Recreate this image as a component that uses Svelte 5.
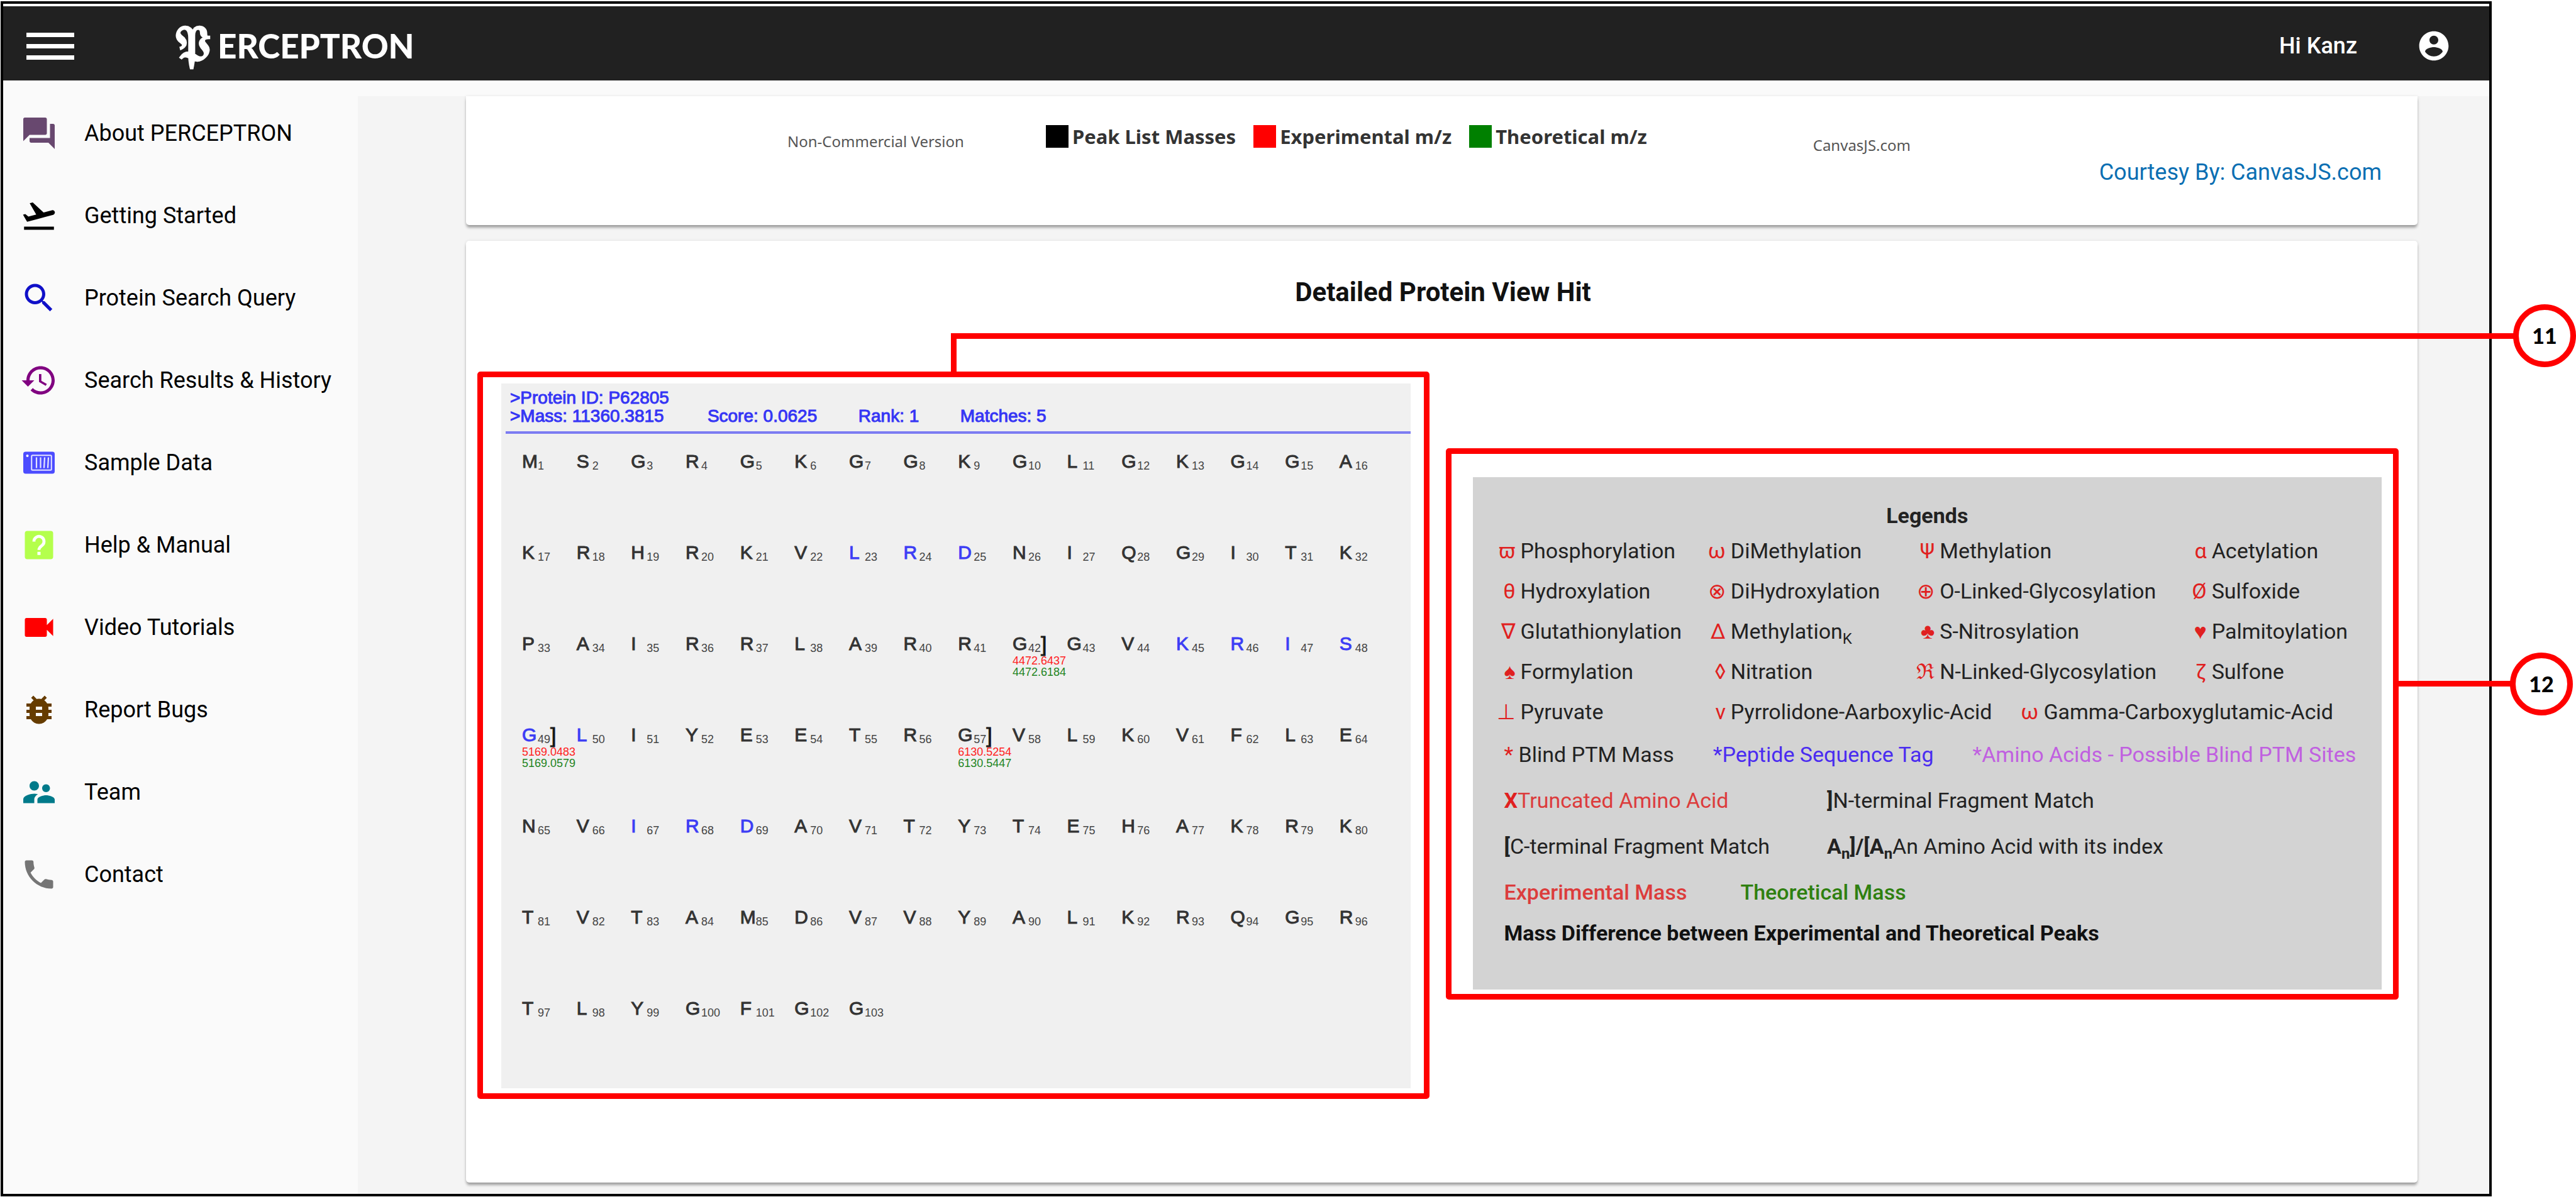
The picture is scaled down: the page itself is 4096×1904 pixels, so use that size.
<script>
  const navItems = [
    { label: 'About PERCEPTRON', icon: 'chat', color: '#68486f' },
    { label: 'Getting Started', icon: 'takeoff', color: '#000000' },
    { label: 'Protein Search Query', icon: 'search', color: '#1010c8' },
    { label: 'Search Results & History', icon: 'history', color: '#800080' },
    { label: 'Sample Data', icon: 'data', color: '#4c4cff' },
    { label: 'Help & Manual', icon: 'help', color: '#b4ff4c' },
    { label: 'Video Tutorials', icon: 'video', color: '#ff0000' },
    { label: 'Report Bugs', icon: 'bug', color: '#663c00' },
    { label: 'Team', icon: 'team', color: '#007a8a' },
    { label: 'Contact', icon: 'call', color: '#757575' }
  ];

  const paths = {
    chat: 'M21 6h-2v9H6v2c0 .55.45 1 1 1h11l4 4V7c0-.55-.45-1-1-1zm-4 6V3c0-.55-.45-1-1-1H3c-.55 0-1 .45-1 1v14l4-4h10c.55 0 1-.45 1-1z',
    takeoff: 'M2.5 19h19v2h-19zm19.57-9.36c-.21-.8-1.04-1.28-1.84-1.06L14.92 10l-6.9-6.43-1.93.51 4.14 7.17-4.97 1.33-1.97-1.54-1.45.39 1.82 3.16.77 1.33 1.6-.43 5.31-1.42 4.35-1.16L21 11.49c.81-.23 1.28-1.05 1.07-1.85z',
    search: 'M15.5 14h-.79l-.28-.27C15.41 12.59 16 11.11 16 9.5 16 5.91 13.09 3 9.5 3S3 5.91 3 9.5 5.91 16 9.5 16c1.61 0 3.09-.59 4.23-1.57l.27.28v.79l5 4.99L20.49 19l-4.99-5zm-6 0C7.01 14 5 11.99 5 9.5S7.01 5 9.5 5 14 7.01 14 9.5 11.99 14 9.5 14z',
    history: 'M13 3c-4.97 0-9 4.03-9 9H1l3.89 3.89.07.14L9 12H6c0-3.87 3.13-7 7-7s7 3.13 7 7-3.13 7-7 7c-1.93 0-3.68-.79-4.94-2.06l-1.42 1.42C8.27 19.99 10.51 21 13 21c4.97 0 9-4.03 9-9s-4.03-9-9-9zm-1 5v5l4.28 2.54.72-1.21-3.5-2.08V8H12z',
    video: 'M17 10.5V7c0-.55-.45-1-1-1H4c-.55 0-1 .45-1 1v10c0 .55.45 1 1 1h12c.55 0 1-.45 1-1v-3.5l4 4v-11l-4 4z',
    bug: 'M20 8h-2.81c-.45-.78-1.07-1.45-1.82-1.96L17 4.41 15.59 3l-2.17 2.17C12.96 5.06 12.49 5 12 5c-.49 0-.96.06-1.41.17L8.41 3 7 4.41l1.62 1.63C7.88 6.55 7.26 7.22 6.81 8H4v2h2.09c-.05.33-.09.66-.09 1v1H4v2h2v1c0 .34.04.67.09 1H4v2h2.81c1.04 1.79 2.97 3 5.19 3s4.15-1.21 5.19-3H20v-2h-2.09c.05-.33.09-.66.09-1v-1h2v-2h-2v-1c0-.34-.04-.67-.09-1H20V8zm-6 8h-4v-2h4v2zm0-4h-4v-2h4v2z',
    team: 'M16.5 12c1.38 0 2.49-1.12 2.49-2.5S17.88 7 16.5 7C15.12 7 14 8.12 14 9.5s1.12 2.5 2.5 2.5zM9 11c1.66 0 2.99-1.34 2.99-3S10.66 5 9 5C7.34 5 6 6.34 6 8s1.34 3 3 3zm7.5 3c-1.83 0-5.5.92-5.5 2.75V19h11v-2.25c0-1.83-3.67-2.75-5.5-2.75zM9 13c-2.33 0-7 1.17-7 3.5V19h7v-2.25c0-.85.33-2.34 2.37-3.47C10.5 13.1 9.66 13 9 13z',
    call: 'M6.62 10.79c1.44 2.83 3.76 5.14 6.59 6.59l2.2-2.2c.27-.27.67-.36 1.02-.24 1.12.37 2.33.57 3.57.57.55 0 1 .45 1 1V20c0 .55-.45 1-1 1-9.39 0-17-7.61-17-17 0-.55.45-1 1-1h3.5c.55 0 1 .45 1 1 0 1.25.2 2.45.57 3.57.11.35.03.74-.25 1.02l-2.2 2.2z'
  };

  const sequence =
    'MSGRGKGGKGLGKGGA' +
    'KRHRKVLRDNIQGITK' +
    'PAIRRLARRGGVKRIS' +
    'GLIYEETRGVLKVFLE' +
    'NVIRDAVTYTEHAKRK' +
    'TVTAMDVVYALKRQGR' +
    'TLYGFGG';
  const tagged = new Set([23, 24, 25, 45, 46, 47, 48, 49, 50, 67, 68, 69]);
  const fragments = {
    42: { experimental: '4472.6437', theoretical: '4472.6184' },
    49: { experimental: '5169.0483', theoretical: '5169.0579' },
    57: { experimental: '6130.5254', theoretical: '6130.5447' }
  };
  const residues = [...sequence].map((letter, i) => ({
    letter,
    index: i + 1,
    tag: tagged.has(i + 1),
    fragment: fragments[i + 1]
  }));

  const modifications = [
    ['ϖ', 'Phosphorylation'], ['ω', 'DiMethylation'], ['Ψ', 'Methylation'], ['α', 'Acetylation'],
    ['θ', 'Hydroxylation'], ['⊗', 'DiHydroxylation'], ['⊕', 'O-Linked-Glycosylation'], ['Ø', 'Sulfoxide'],
    ['∇', 'Glutathionylation'], ['Δ', 'Methylation', 'K'], ['♣', 'S-Nitrosylation'], ['♥', 'Palmitoylation'],
    ['♠', 'Formylation'], ['◊', 'Nitration'], ['ℜ', 'N-Linked-Glycosylation'], ['ζ', 'Sulfone']
  ];
  const acids = [
    ['⊥', 'Pyruvate'], ['ν', 'Pyrrolidone-Aarboxylic-Acid'], ['ω', 'Gamma-Carboxyglutamic-Acid']
  ];
</script>

<div class="page">
  <div class="frame">
    <header>
      <button class="menu" aria-label="Toggle menu"><i></i><i></i><i></i></button>
      <a class="brand" href="#home" aria-label="Perceptron home"><span class="initial">𝔓</span><span>ERCEPTRON</span></a>
      <span class="greeting">Hi Kanz</span>
      <button class="account" aria-label="Account">
        <svg viewBox="0 0 24 24"><path d="M12 2C6.48 2 2 6.48 2 12s4.48 10 10 10 10-4.48 10-10S17.52 2 12 2zm0 3c1.66 0 3 1.34 3 3s-1.34 3-3 3-3-1.34-3-3 1.34-3 3-3zm0 14.2c-2.5 0-4.71-1.28-6-3.22.03-1.99 4-3.08 6-3.08 1.99 0 5.97 1.09 6 3.08-1.29 1.94-3.5 3.22-6 3.22z" /></svg>
      </button>
    </header>

    <div class="body">
      <nav>
        {#each navItems as item}
          <a href="#{item.icon}">
            <svg viewBox="0 0 24 24" fill={item.color}>
              {#if item.icon === 'data'}
                <rect x="2" y="5" width="20" height="14" rx="1.5" />
                <circle cx="4.6" cy="7.6" r=".8" fill="#fff" />
                <rect x="7.3" y="7.3" width="12.6" height="9.4" rx=".6" fill="none" stroke="#e4e4ff" stroke-width=".8" />
                <path d="M10.4 8.6v6.8M13 8.6v6.8M15.6 8.6l-.4 6.8M18 8.6l-.4 6.8" fill="none" stroke="#e4e4ff" stroke-width=".9" />
              {:else if item.icon === 'help'}
                <rect x="3" y="3" width="18" height="18" rx="1.6" />
                <path d="M8.8 9.8a3.2 3.2 0 1 1 5.3 2.3c-1.2 1-2.1 1.4-2.1 3" fill="none" stroke="#fff" stroke-width="1.9" />
                <rect x="11" y="16.3" width="2" height="2" fill="#fff" />
              {:else}
                <path d={paths[item.icon]} />
              {/if}
            </svg>
            <span>{item.label}</span>
          </a>
        {/each}
      </nav>

      <main>
        <section class="card chart">
          <div class="chart-foot">
            <span class="license">Non-Commercial Version</span>
            <ul>
              <li><i class="peak"></i>Peak List Masses</li>
              <li><i class="exp"></i>Experimental m/z</li>
              <li><i class="theo"></i>Theoretical m/z</li>
            </ul>
            <span class="vendor">CanvasJS.com</span>
          </div>
          <a class="courtesy" href="#canvasjs">Courtesy By: CanvasJS.com</a>
        </section>

        <section class="card detail">
          <h1>Detailed Protein View Hit</h1>
          <div class="views">
            <div class="marked protein-box">
              <div class="protein">
                <div class="summary">
                  <div>&gt;Protein ID: P62805</div>
                  <div class="stats">
                    <span>&gt;Mass: 11360.3815</span><span>Score: 0.0625</span><span>Rank: 1</span><span>Matches: 5</span>
                  </div>
                </div>
                <div class="residues">
                  {#each residues as r}
                    <div class="residue">
                      <div class="symbol">
                        <span class="letter" class:tag={r.tag}>{r.letter}</span><span class="index">{r.index}</span>{#if r.fragment}<span class="bracket">]</span>{/if}
                      </div>
                      {#if r.fragment}
                        <div class="mass red">{r.fragment.experimental}</div>
                        <div class="mass green">{r.fragment.theoretical}</div>
                      {/if}
                    </div>
                  {/each}
                </div>
              </div>
            </div>

            <div class="marked legend-box">
              <div class="legend">
                <h2>Legends</h2>
                <div class="mods">
                  {#each modifications as [sign, name, sub]}
                    <div class="mod"><span class="sign">{sign}</span><span>{name}{#if sub}<sub>{sub}</sub>{/if}</span></div>
                  {/each}
                </div>
                <div class="mods acids">
                  {#each acids as [sign, name]}
                    <div class="mod"><span class="sign">{sign}</span><span>{name}</span></div>
                  {/each}
                </div>
                <div class="line tags">
                  <span><span class="sign">*</span> Blind PTM Mass</span>
                  <span class="blue">*Peptide Sequence Tag</span>
                  <span class="violet">*Amino Acids - Possible Blind PTM Sites</span>
                </div>
                <div class="line pair">
                  <span class="crimson"><b class="cut">X</b>Truncated Amino Acid</span>
                  <span><b>]</b>N-terminal Fragment Match</span>
                </div>
                <div class="line pair">
                  <span><b>[</b>C-terminal Fragment Match</span>
                  <span><b>A<sub>n</sub>]/[A<sub>n</sub></b>An Amino Acid with its index</span>
                </div>
                <div class="line masses">
                  <span class="crimson">Experimental Mass</span>
                  <span class="leaf">Theoretical Mass</span>
                </div>
                <div class="line strong">Mass Difference between Experimental and Theoretical Peaks</div>
              </div>
            </div>
          </div>
        </section>
      </main>
    </div>
  </div>

  <div class="lead lead-protein"></div>
  <div class="lead lead-legend"></div>
  <div class="badge badge-protein">11</div>
  <div class="badge badge-legend">12</div>
</div>

<style>
  :global(body) { margin: 0; background: #fff; }
  .page, .page * { box-sizing: border-box; }
  .page {
    position: relative;
    display: flex;
    min-height: 100vh;
    padding: 2px 134px 1px 1px;
    font-family: Roboto, "Liberation Sans", sans-serif;
    color: #111;
  }
  .frame {
    flex: 1;
    display: flex;
    flex-direction: column;
    border: 4px solid #000;
    background: #fff;
  }
  button { border: 0; padding: 0; background: none; }
  a { text-decoration: none; color: inherit; }
  header {
    display: flex;
    align-items: center;
    height: 118px;
    margin-top: 4px;
    padding: 8px 60px 0 37px;
    background: #212121;
    color: #fff;
  }
  .menu { display: grid; gap: 11px; width: 76px; }
  .menu i { height: 7px; background: #fff; }
  .brand {
    display: flex;
    align-items: flex-start;
    height: 60px;
    margin-left: 150px;
    font: 900 53px/60px Lato, sans-serif;
  }
  .initial {
    width: 78px;
    text-align: center;
    font-size: 78px;
    line-height: 48px;
    -webkit-text-stroke: 2px #fff;
  }
  .greeting { margin-left: auto; font-size: 36px; font-weight: 500; }
  .account { width: 56px; height: 56px; margin-left: 94px; fill: #fff; }
  .account svg { display: block; }

  .body { flex: 1; display: flex; background: #fafafa; border-top: 3px solid #fff; }
  nav { width: 564px; padding-top: 15px; flex: none; }
  nav a {
    display: flex;
    align-items: center;
    gap: 42px;
    height: 131px;
    padding-left: 27px;
    font-size: 36px;
    color: #000;
  }
  nav svg { width: 60px; height: 60px; }
  main {
    flex: 1;
    display: flex;
    flex-direction: column;
    gap: 25px;
    margin-top: 22px;
    padding: 0 114px 18px 172px;
    background: #f4f4f4;
  }
  .card {
    background: #fff;
    border-radius: 5px;
    box-shadow: 0 5px 4px -1px rgba(0, 0, 0, .3), 0 1px 5px rgba(0, 0, 0, .14);
  }
  .chart { padding: 46px 57px 64px 511px; border-radius: 0 0 5px 5px; }
  .chart-foot { display: flex; align-items: flex-start; line-height: 36px; }
  .license, .vendor { font-family: "Noto Sans", sans-serif; font-size: 24px; color: #555; }
  .license { padding-top: 8px; }
  .vendor { padding-top: 14px; margin: 0 749px 0 auto; }
  ul {
    display: flex;
    gap: 28px;
    margin: 0 0 0 130px;
    padding: 0;
    list-style: none;
    font: 700 31px/36px "Noto Sans", sans-serif;
    color: #333;
  }
  li { display: flex; gap: 6px; }
  li i { width: 36px; height: 36px; }
  .peak { background: #000; }
  .exp { background: #f00; }
  .theo { background: #008000; }
  .courtesy {
    display: block;
    text-align: right;
    font-size: 36px;
    line-height: 40px;
    margin-top: 5px;
    color: #0b6fb3;
  }

  .detail { flex: 1; padding: 58px 30px 0 18px; }
  h1 { margin: 0; padding-left: 16px; text-align: center; font-size: 42px; line-height: 48px; font-weight: 700; }
  .views { display: flex; align-items: flex-start; gap: 26px; margin-top: 102px; }
  .marked { flex: 1 1 0; border: 9px solid #f00; border-radius: 5px; }
  .protein-box { padding: 10px 21px 8px 29px; }
  .protein {
    background: #f0f0f0;
    font-family: "Liberation Sans", Arial, sans-serif;
    padding: 8px 0 0 7px;
  }
  .summary {
    font-size: 28px;
    line-height: 29px;
    color: #3535f5;
    -webkit-text-stroke: 1px #3535f5;
    padding: 0 0 10px 7px;
    border-bottom: 4px solid #7c7cf2;
  }
  .stats { display: grid; grid-template-columns: 314fr 240fr 162fr 716fr; }
  .residues {
    display: grid;
    grid-template-columns: repeat(16, minmax(0, 1fr));
    grid-auto-rows: 145px;
    padding: 26px 26px 0 26px;
  }
  .symbol { display: flex; align-items: center; height: 36px; }
  .letter { width: 25px; font-size: 30px; color: #333; -webkit-text-stroke: 1px currentColor; }
  .letter.tag { color: #3d3df5; }
  .index { font-size: 18px; padding-top: 15px; color: #444; }
  .bracket { font-size: 34px; -webkit-text-stroke: 1px #222; }
  .mass { font-size: 18px; line-height: 18px; }
  .mass.red { color: #f22; }
  .mass.green { color: #1f851f; }

  .legend-box { margin-top: 122px; padding: 37px 18px 7px 34px; }
  .legend { background: #d3d3d3; padding: 41px 0 62px 34px; font-size: 34px; color: #222; }
  h2 { margin: 0 34px 4px 0; text-align: center; font-size: 34px; line-height: 40px; font-weight: 700; }
  .mods { display: grid; grid-template-columns: 334fr 332fr 432fr 312fr; line-height: 64px; }
  .acids { grid-template-columns: 334fr 497fr 579fr; }
  .mod { display: flex; gap: 8px; white-space: nowrap; height: 64px; }
  .mod .sign { width: 34px; text-align: right; }
  .sign { color: #e02020; }
  sub { font-size: 24px; line-height: 0; }
  .line { display: flex; padding-left: 16px; line-height: 73px; white-space: nowrap; }
  .tags { gap: 62px; }
  .pair { display: grid; grid-template-columns: 513fr 881fr; }
  .masses { gap: 85px; font-weight: 500; }
  .strong { font-weight: 700; line-height: 56px; color: #111; }
  .blue { color: #4a2cf0; }
  .violet { color: #c060e0; }
  .crimson { color: #dc3c3c; }
  .cut { color: #e02020; }
  .leaf { color: #2f8010; }

  .lead { position: absolute; border: 0 solid #f00; border-top-width: 9px; }
  .lead-protein { top: 530px; left: 1512px; right: 96px; height: 66px; border-left-width: 9px; }
  .lead-legend { top: 1083px; left: 3812px; right: 96px; }
  .badge {
    position: absolute;
    width: 100px;
    height: 100px;
    border: 9px solid #f00;
    border-radius: 50%;
    background: #fff;
    color: #000;
    text-align: center;
    font: 900 34px/82px Lato, sans-serif;
  }
  .badge-protein { top: 484px; right: 0; }
  .badge-legend { top: 1038px; right: 5px; }
</style>
